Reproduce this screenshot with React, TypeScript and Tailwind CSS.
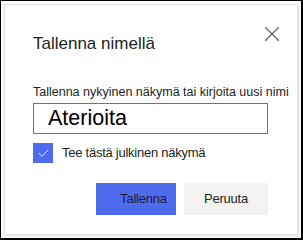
import { Check, X } from 'lucide-react';

export default function App() {
  return (
    <div
      className="w-[303px] h-[240px] bg-white border-t border-l border-r-2 border-b-2 border-black p-[3px] overflow-hidden"
      style={{ fontFamily: '"Liberation Sans", Arial, sans-serif' }}
    >
      <div className="h-full bg-white border border-[#e3e3e3] shadow-[1px_1px_3px_rgba(0,0,0,0.14)] flex flex-col pl-[28px] pr-[27px]">
        <div className="flex items-start justify-between pt-[22px]">
          <h2 className="text-[17px] leading-[22px] text-[#201f1e] mt-[6px]">Tallenna nimellä</h2>
          <button className="text-[#605e5c] -mt-[6px] -mr-[15px]">
            <X size={26} strokeWidth={1} />
          </button>
        </div>

        <label className="mt-[29px] text-[12.5px] leading-[16px] text-[#201f1e] whitespace-nowrap">
          Tallenna nykyinen näkymä tai kirjoita uusi nimi
        </label>
        <div className="mt-[3px] w-[235px] h-[31px] border border-solid border-[#4f6bed] flex items-center pl-[14px]">
          <span className="text-[21.5px] leading-none text-black">Aterioita</span>
        </div>

        <div className="mt-[9px] flex items-center gap-[9px] h-[20px]">
          <div className="w-[20px] h-[20px] bg-[#4f6bed] flex items-center justify-center">
            <Check size={13} strokeWidth={1.6} className="text-white" />
          </div>
          <span className="text-[13px] text-[#201f1e] tracking-[-0.25px]">Tee tästä julkinen näkymä</span>
        </div>

        <div className="mt-[20px] flex justify-end gap-[8px] w-[235px]">
          <button className="w-[80px] h-[32px] bg-[#4f6bed] text-[13px] text-[#1b1a3a] pl-[15px] tracking-[-0.2px]">
            Tallenna
          </button>
          <button className="w-[84px] h-[32px] bg-[#f3f2f1] text-[13px] text-[#201f1e] tracking-[-0.2px]">
            Peruuta
          </button>
        </div>
      </div>
    </div>
  );
}
